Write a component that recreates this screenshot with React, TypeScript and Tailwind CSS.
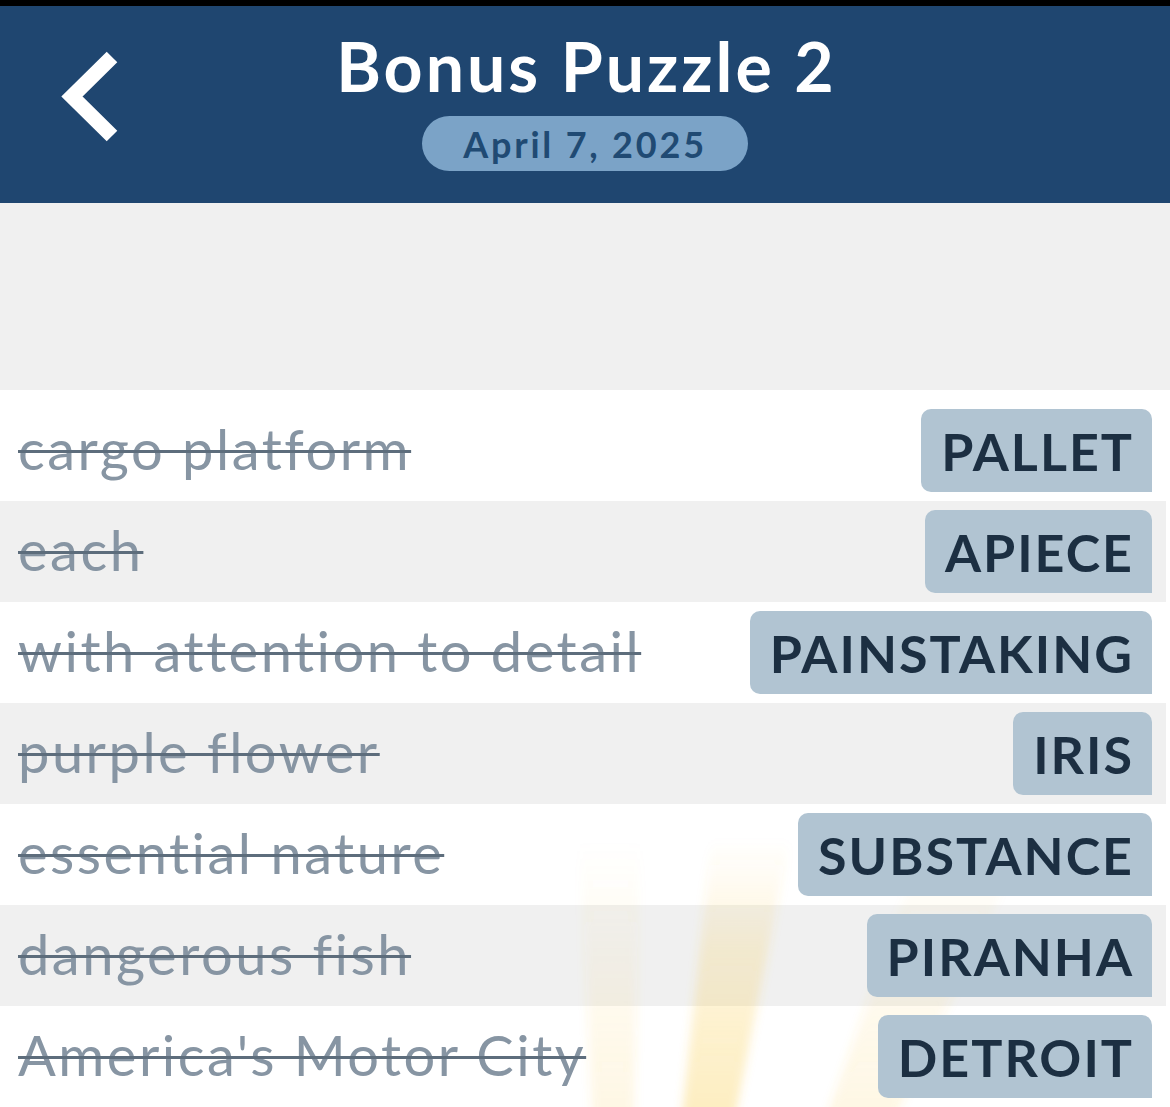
import React from "react";

const rows: { clue: string; answer: string }[] = [
  { clue: "cargo platform", answer: "PALLET" },
  { clue: "each", answer: "APIECE" },
  { clue: "with attention to detail", answer: "PAINSTAKING" },
  { clue: "purple flower", answer: "IRIS" },
  { clue: "essential nature", answer: "SUBSTANCE" },
  { clue: "dangerous fish", answer: "PIRANHA" },
  { clue: "America's Motor City", answer: "DETROIT" },
];

const font = { fontFamily: "Lato, 'Open Sans', sans-serif" };

function Rays() {
  // center of the burst lies below the screen
  const cx = 620;
  const cy = 1310;
  const k = (cy - 400) / (cy - 717);
  const ray = (a: number, b: number) =>
    `${cx},${cy} ${cx + (a - cx) * k},400 ${cx + (b - cx) * k},400`;
  return (
    <svg
      className="pointer-events-none absolute inset-0"
      width="1170"
      height="717"
      viewBox="0 0 1170 717"
    >
      <defs>
        <linearGradient id="rg" x1="0" y1="717" x2="0" y2="450" gradientUnits="userSpaceOnUse">
          <stop offset="0" stopColor="#f8c93f" stopOpacity="0.32" />
          <stop offset="0.6" stopColor="#f8c93f" stopOpacity="0.18" />
          <stop offset="1" stopColor="#f8c93f" stopOpacity="0" />
        </linearGradient>
        <linearGradient id="rg2" x1="0" y1="717" x2="0" y2="450" gradientUnits="userSpaceOnUse">
          <stop offset="0" stopColor="#f8c93f" stopOpacity="0.14" />
          <stop offset="1" stopColor="#f8c93f" stopOpacity="0" />
        </linearGradient>
        <filter id="bl" x="-20%" y="-20%" width="140%" height="140%">
          <feGaussianBlur stdDeviation="5" />
        </filter>
      </defs>
      <g filter="url(#bl)">
        <polygon points={ray(592, 634)} fill="url(#rg2)" />
        <polygon points={ray(683, 737)} fill="url(#rg)" />
        <polygon points={ray(830, 900)} fill="url(#rg2)" />
      </g>
    </svg>
  );
}

export default function App() {
  return (
    <div className="w-[1170px] h-[1107px] overflow-hidden bg-white" style={font}>
      <div className="h-[6px] bg-black" />
      <header className="h-[197px] bg-[#1f4670] grid grid-cols-[1fr_auto_1fr]">
        <div className="pl-[56px] pt-[39px]">
          <svg width="70" height="100" viewBox="0 0 70 100">
            <polyline
              points="56,12 16,51.5 56,91"
              fill="none"
              stroke="#ffffff"
              strokeWidth="15"
              strokeLinecap="butt"
              strokeLinejoin="miter"
            />
          </svg>
        </div>
        <div className="flex flex-col items-center pt-[19px]">
          <div className="text-white font-bold text-[68px] leading-[82px] tracking-[3px] pl-[3px]">
            Bonus Puzzle 2
          </div>
          <div className="mt-[9px] h-[55px] w-[326px] rounded-full bg-[#7ba3c7] flex items-center justify-center text-[#204a73] font-bold text-[36px] tracking-[2.8px]">
            April 7, 2025
          </div>
        </div>
        <div />
      </header>
      <div className="h-[187px] bg-[#f0f0f0]" />
      <div className="relative bg-white pt-[10px] pr-[4px]">
        {rows.map((r, i) => (
          <div
            key={r.clue}
            className={`h-[101px] flex items-center justify-between pl-[18px] pr-[14px] ${
              i % 2 === 1 ? "bg-[#f0f0f0]" : "bg-white"
            }`}
          >
            <span className="relative z-10 text-[56px] text-[#8795a3] line-through decoration-[#5d6d7c] decoration-[3px] tracking-[2.5px] -mt-[4px]">
              {r.clue}
            </span>
            <span className="relative z-10 h-[83px] pl-[20px] pr-[18px] flex items-center bg-[#b1c4d2] rounded-tl-[10px] rounded-bl-[10px] rounded-tr-[10px] text-[#1c2f42] font-bold text-[52px] tracking-[2px]">
              {r.answer}
            </span>
          </div>
        ))}
        <Rays />
      </div>
    </div>
  );
}
